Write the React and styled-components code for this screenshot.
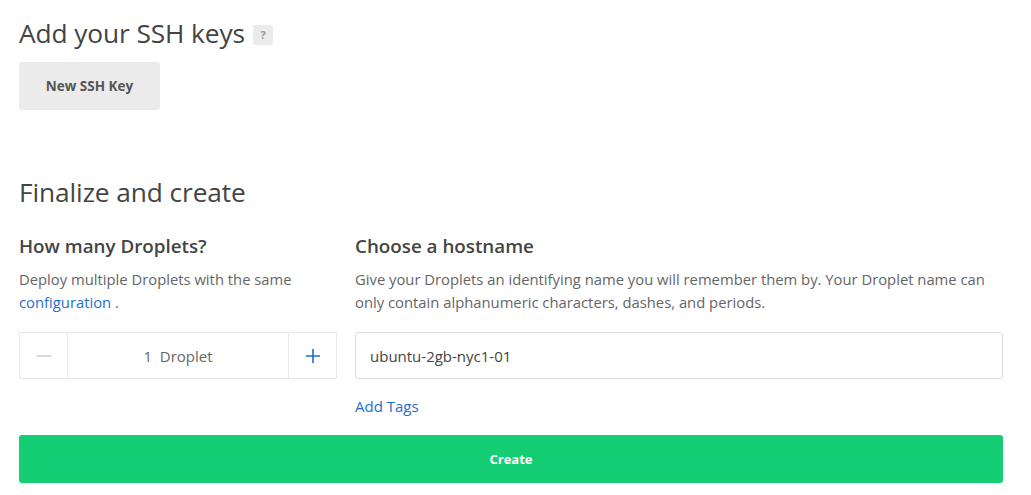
import { useState } from "react";
import styled, { createGlobalStyle } from "styled-components";

const GlobalStyle = createGlobalStyle`
  body {
    margin: 0;
    background: #fff;
    font-family: "Open Sans", "Liberation Sans", sans-serif;
    color: #444;
  }
`;

const Page = styled.div`
  width: 984px;
  padding: 14px 0 0 19px;
`;

const Title = styled.h2`
  display: flex;
  align-items: center;
  gap: 8px;
  margin: 0;
  font-size: 26.3px;
  font-weight: 400;
  line-height: 38px;
  color: #444;
  letter-spacing: -0.1px;
`;

const Help = styled.span`
  display: inline-flex;
  align-items: center;
  justify-content: center;
  width: 20px;
  height: 20px;
  margin-top: 4px;
  background: #ebebeb;
  color: #999;
  font-size: 11px;
  font-weight: 700;
  border-radius: 2px;
`;

const GreyButton = styled.button`
  margin-top: 10px;
  width: 141px;
  height: 48px;
  border: 0;
  border-radius: 3px;
  background: #ebebeb;
  color: #555;
  font-family: inherit;
  font-size: 13.5px;
  font-weight: 700;
`;

const Section = styled.section`
  margin-top: ${(p) => p.$top || 0}px;
`;

const Columns = styled.div`
  display: grid;
  grid-template-columns: 318px 1fr;
  column-gap: 18px;
  margin-top: 22px;
`;

const Column = styled.div`
  display: flex;
  flex-direction: column;
`;

const SubTitle = styled.h3`
  margin: 0;
  font-size: 18.8px;
  font-weight: 600;
  line-height: 26px;
  color: #444;
`;

const Text = styled.p`
  margin: 9px 0 0;
  font-size: 14.8px;
  line-height: 23px;
  color: #666;
`;

const Link = styled.a`
  color: #1f6fd0;
  text-decoration: none;
  cursor: pointer;
`;

const Stepper = styled.div`
  display: flex;
  height: 45px;
  margin-top: 18px;
  border: 1px solid #e8e8e8;
`;

const StepButton = styled.button`
  width: 48px;
  border: 0;
  border-${(p) => (p.$side === "left" ? "right" : "left")}: 1px solid #e8e8e8;
  background: #fff;
  display: flex;
  align-items: center;
  justify-content: center;
  padding: 0;
  cursor: pointer;
`;

const Count = styled.div`
  flex: 1;
  display: flex;
  align-items: center;
  justify-content: center;
  font-size: 15px;
  color: #666;
`;

const Input = styled.input`
  box-sizing: border-box;
  margin-top: 18px;
  width: 648px;
  height: 47px;
  padding: 0 14px;
  border: 1px solid #ddd;
  border-radius: 3px;
  font-family: inherit;
  font-size: 15px;
  color: #444;
  outline: none;
`;

const TagLink = styled(Link)`
  margin-top: 17px;
  font-size: 15px;
  line-height: 20px;
`;

const CreateButton = styled.button`
  width: 984px;
  height: 48px;
  margin-top: 19px;
  border: 0;
  border-radius: 3px;
  background: #15cd72;
  color: #fff;
  font-family: inherit;
  font-size: 13px;
  font-weight: 700;
  cursor: pointer;
`;

const Minus = () => (
  <svg width="16" height="16" viewBox="0 0 16 16">
    <path d="M1 8h14" stroke="#ccc" strokeWidth="1.5" />
  </svg>
);

const Plus = () => (
  <svg width="16" height="16" viewBox="0 0 16 16">
    <path d="M1 8h14M8 1v14" stroke="#1f6fd0" strokeWidth="1.6" />
  </svg>
);

export default function App() {
  const [count, setCount] = useState(1);
  return (
    <Page>
      <GlobalStyle />
      <Section>
        <Title>
          Add your SSH keys <Help>?</Help>
        </Title>
        <GreyButton>New SSH Key</GreyButton>
      </Section>
      <Section $top={63}>
        <Title>Finalize and create</Title>
        <Columns>
          <Column>
            <SubTitle>How many Droplets?</SubTitle>
            <Text>
              Deploy multiple Droplets with the same <Link>configuration</Link> .
            </Text>
            <Stepper>
              <StepButton $side="left" onClick={() => setCount(Math.max(1, count - 1))}>
                <Minus />
              </StepButton>
              <Count>
                {count}&nbsp; Droplet{count > 1 ? "s" : ""}
              </Count>
              <StepButton $side="right" onClick={() => setCount(count + 1)}>
                <Plus />
              </StepButton>
            </Stepper>
          </Column>
          <Column>
            <SubTitle>Choose a hostname</SubTitle>
            <Text>
              Give your Droplets an identifying name you will remember them by. Your Droplet name can
              only contain alphanumeric characters, dashes, and periods.
            </Text>
            <Input defaultValue="ubuntu-2gb-nyc1-01" />
            <TagLink>Add Tags</TagLink>
          </Column>
        </Columns>
        <CreateButton>Create</CreateButton>
      </Section>
    </Page>
  );
}
